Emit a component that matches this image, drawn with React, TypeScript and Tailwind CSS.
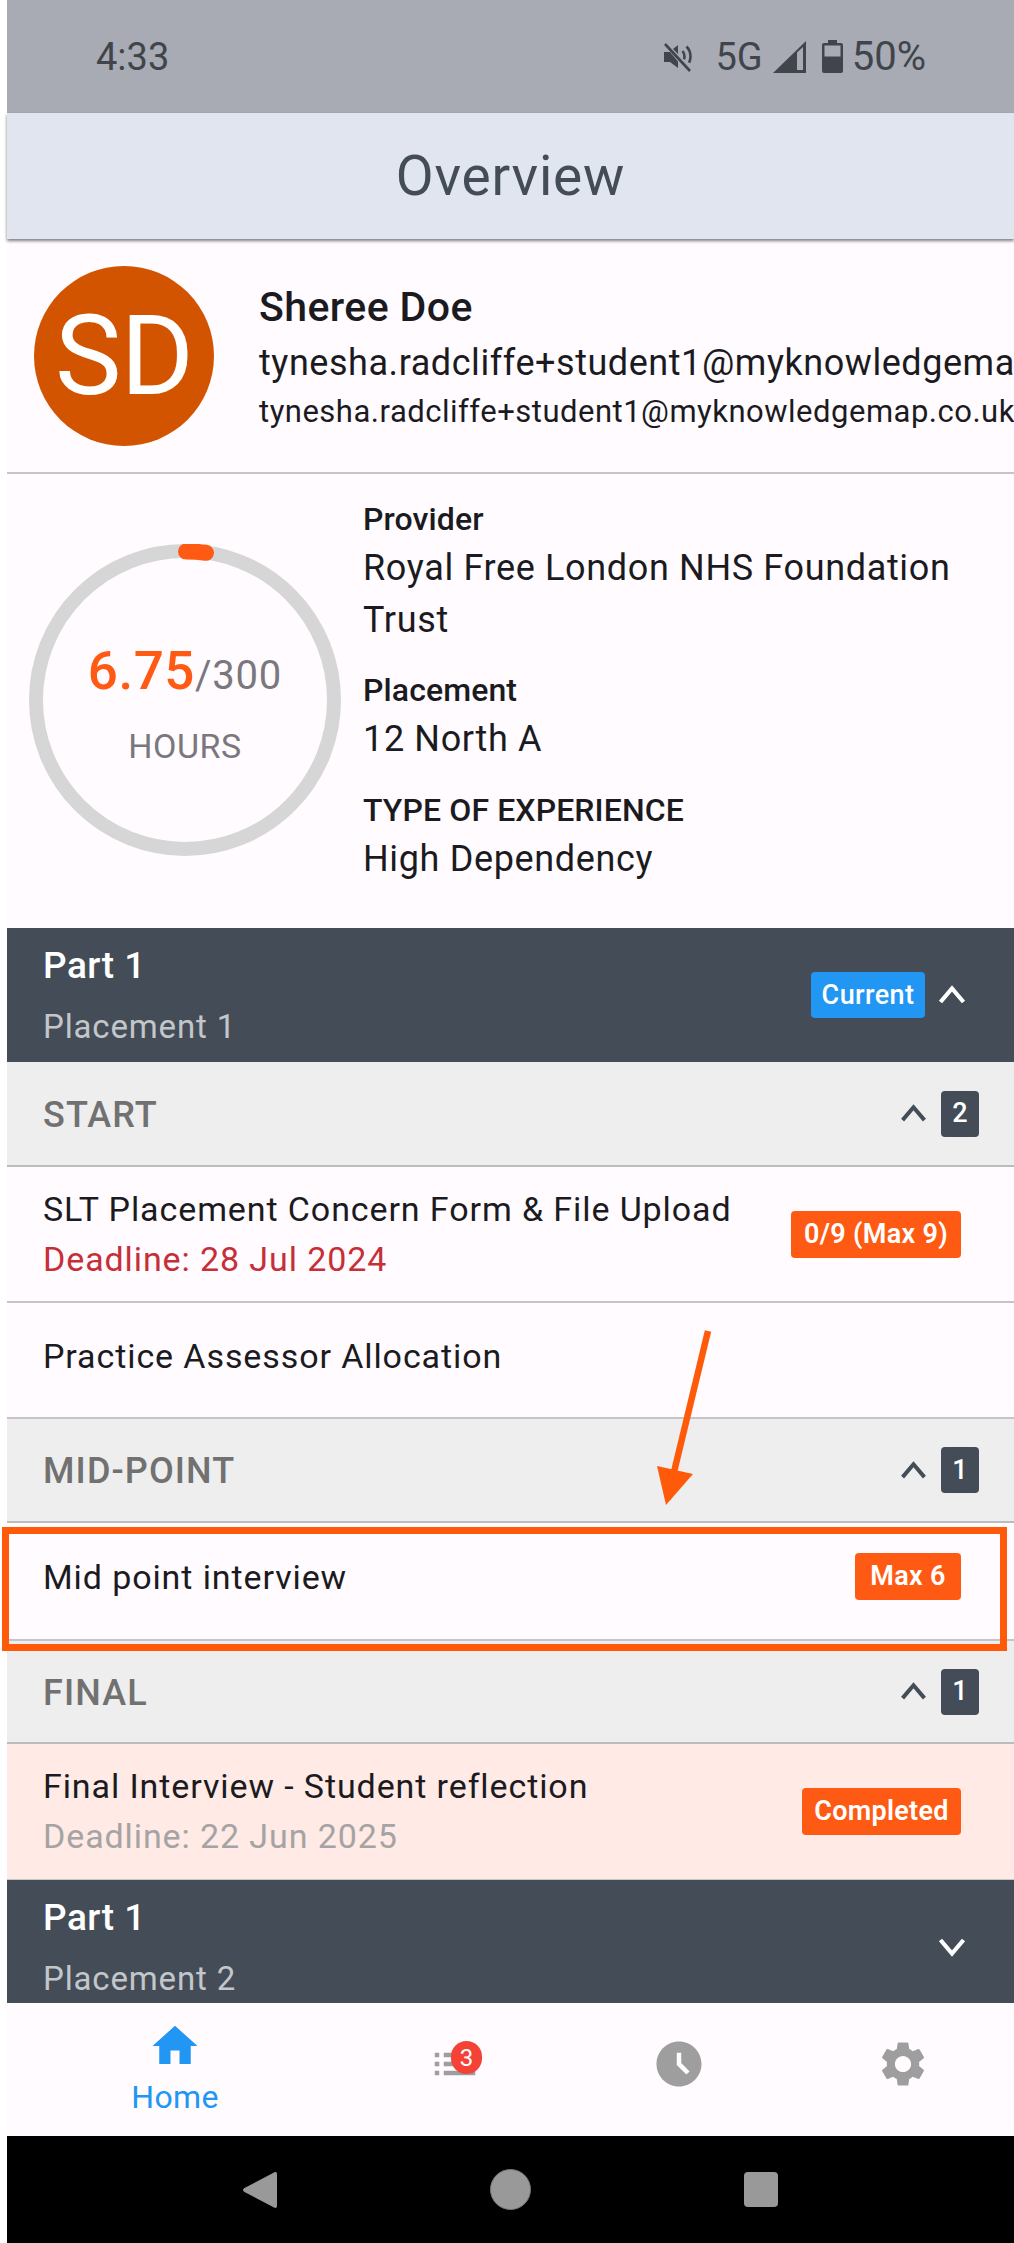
const font = { fontFamily: 'Roboto, "Liberation Sans", sans-serif' };

function Chevron({ up, className }: { up: boolean; className: string }) {
  return (
    <svg viewBox="0 0 28 20" className={className} fill="none" stroke="currentColor" strokeWidth="4.2">
      <path d={up ? "M2.5 17 14 3.5 25.5 17" : "M2.5 3 14 16.5 25.5 3"} />
    </svg>
  );
}

function PartHeader({ sub, current, up }: { sub: string; current?: boolean; up: boolean }) {
  return (
    <div className="flex h-[134px] shrink-0 items-center bg-[#444d57] pl-[36px]">
      <div className="flex-1 pt-[2px]">
        <div className="text-[37px] leading-[61px] font-medium tracking-[0.5px] text-white">Part 1</div>
        <div className="text-[33px] leading-[61px] tracking-[0.85px] text-[#c3c6ca]">{sub}</div>
      </div>
      {current && (
        <div className="mr-[13px] flex h-[46px] w-[114px] items-center justify-center rounded-[4px] bg-[#2196f3] text-[27px] font-medium tracking-[0.4px] text-white">
          Current
        </div>
      )}
      <Chevron up={up} className="mr-[48px] h-[20px] w-[28px] text-white" />
    </div>
  );
}

function Section({ title, count, height }: { title: string; count: number; height: string }) {
  return (
    <div className={`flex shrink-0 items-center border-b-[2px] border-[#bcbcbc] bg-[#eeeeee] pl-[36px] ${height}`}>
      <div className="flex-1 pt-[2px] text-[36px] font-medium tracking-[1.1px] text-[#717171]">{title}</div>
      <Chevron up className="mr-[14px] h-[19px] w-[27px] text-[#444d57]" />
      <div className="mr-[35px] flex h-[46px] w-[38px] items-center justify-center rounded-[4px] bg-[#444d57] text-[27px] font-medium text-white">
        {count}
      </div>
    </div>
  );
}

function Badge({ children, className }: { children: string; className: string }) {
  return (
    <div className={`flex items-center justify-center rounded-[4px] bg-[#ff5a14] text-[27px] font-semibold tracking-[0.3px] text-white ${className}`}>
      {children}
    </div>
  );
}

function Item({
  title,
  deadline,
  deadlineClass,
  badge,
  badgeClass,
  textClass,
  className,
}: {
  title: string;
  deadline?: string;
  deadlineClass?: string;
  badge?: string;
  badgeClass?: string;
  textClass?: string;
  className: string;
}) {
  return (
    <div className={`flex shrink-0 items-center pl-[36px] pr-[53px] ${className}`}>
      <div className={`flex-1 ${textClass ?? ""}`}>
        <div className="text-[34px] leading-[50px] tracking-[0.9px] text-[#1b1b1f]">{title}</div>
        {deadline && <div className={`text-[34px] leading-[50px] tracking-[0.9px] ${deadlineClass}`}>{deadline}</div>}
      </div>
      {badge && <Badge className={badgeClass ?? ""}>{badge}</Badge>}
    </div>
  );
}

function Info({ label, lines, className }: { label: string; lines: string[]; className: string }) {
  return (
    <div className={className}>
      <div className="text-[32px] leading-[40px] font-medium tracking-[0.1px] text-[#1b1b1f]">{label}</div>
      <div className="mt-[3px]">
        {lines.map((l) => (
          <div key={l} className="text-[36px] leading-[52px] tracking-[0.65px] text-[#1b1b1f]">
            {l}
          </div>
        ))}
      </div>
    </div>
  );
}

function NavIcon({ d, className }: { d: string; className: string }) {
  return (
    <svg viewBox="0 0 24 24" className={className} fill="currentColor">
      <path d={d} />
    </svg>
  );
}

export default function App() {
  return (
    <div style={font} className="relative flex h-[2243px] w-[1014px] flex-col overflow-hidden bg-white pl-[7px]">
      {/* status bar */}
      <div className="flex h-[113px] shrink-0 items-center bg-[#a8abb3] pl-[89px] text-[#40454c]">
        <div className="flex-1 text-[38px] leading-none">4:33</div>
        <svg viewBox="0 0 32 32" className="mr-[21px] h-[32px] w-[32px]" fill="none" stroke="currentColor" strokeWidth="2.6">
          <path d="M3 3l25 27" />
          <path d="M2 11h6l8 9.500V27l-8-6H2z" fill="currentColor" stroke="none" />
          <path d="M11 8l5-4v9z" fill="currentColor" stroke="none" />
          <path d="M20.500 10c1.300 1.500 2 3.500 2 5.500 0 1-.2 2-.5 2.800M24.500 5.500c2.600 2.600 4 6.300 4 10 0 2.200-.5 4.300-1.400 6.200" />
        </svg>
        <div className="mr-[10px] text-[38px] leading-none">5G</div>
        <svg viewBox="0 0 33 32" className="mr-[16px] h-[32px] w-[33px]">
          <path d="M0 32 33 0v32z" fill="currentColor" />
          <path d="M24 11.500 24 29h6V6z" fill="#a8abb3" />
        </svg>
        <svg viewBox="0 0 21 33" className="mr-[9px] h-[33px] w-[21px]">
          <path d="M6 0h9v3h4a2 2 0 0 1 2 2v26a2 2 0 0 1-2 2H2a2 2 0 0 1-2-2V5a2 2 0 0 1 2-2h4z" fill="currentColor" />
          <rect x="2.500" y="5.500" width="16" height="11" fill="#a8abb3" />
        </svg>
        <div className="mr-[88px] text-[40px] leading-none">50%</div>
      </div>

      {/* app bar */}
      <div className="z-10 flex h-[126px] shrink-0 items-center justify-center bg-[#e0e5f0] text-[55px] tracking-[0.8px] text-[#444d57] shadow-[0_2px_3px_rgba(0,0,0,0.5)]">
        Overview
      </div>

      {/* scrolling content */}
      <div className="flex min-h-0 flex-1 flex-col overflow-hidden bg-[#fffbff]">
        {/* profile */}
        <div className="flex h-[235px] shrink-0 items-start overflow-hidden border-b-[2px] border-[#c6c4c9] pl-[27px]">
          <div className="mt-[27px] flex h-[180px] w-[180px] shrink-0 items-center justify-center rounded-full bg-[#d35400] text-[112px] leading-none tracking-[-1px] text-white">
            SD
          </div>
          <div className="ml-[45px] mt-[41px] whitespace-nowrap text-[#1b1b1f]">
            <div className="text-[41px] leading-[54px] font-medium tracking-[0.4px]">Sheree Doe</div>
            <div className="text-[36px] leading-[58px] tracking-[0.55px]">tynesha.radcliffe+student1@myknowledgemap.co.uk</div>
            <div className="text-[31px] leading-[40px] tracking-[0.5px]">tynesha.radcliffe+student1@myknowledgemap.co.uk</div>
          </div>
        </div>

        {/* summary */}
        <div className="flex h-[454px] shrink-0">
          <div className="relative ml-[22px] mt-[70px] h-[312px] w-[312px] shrink-0">
            <svg viewBox="0 0 312 312" className="absolute inset-0 h-full w-full" fill="none">
              <circle cx="156" cy="156" r="149" stroke="#d6d6d6" strokeWidth="14" />
              <path d="M157 7.500 A149 149 0 0 1 177 8.800" stroke="#ff5a14" strokeWidth="16" strokeLinecap="round" />
            </svg>
            <div className="absolute inset-x-0 top-[95px] flex flex-col items-center">
              <div className="whitespace-nowrap leading-[64px]">
                <span className="text-[53px] font-medium tracking-[0.5px] text-[#ff5a14]">6.75</span>
                <span className="text-[40px] tracking-[0.8px] text-[#7a777d]">/300</span>
              </div>
              <div className="mt-[8px] text-[34px] leading-[44px] tracking-[0.5px] text-[#7a777d]">HOURS</div>
            </div>
          </div>
          <div className="ml-[22px] flex flex-col pt-[25px]">
            <Info label="Provider" lines={["Royal Free London NHS Foundation", "Trust"]} className="" />
            <Info label="Placement" lines={["12 North A"]} className="mt-[24px]" />
            <Info label="TYPE OF EXPERIENCE" lines={["High Dependency"]} className="mt-[25px]" />
          </div>
        </div>

        <PartHeader sub="Placement 1" current up />
        <Section title="START" count={2} height="h-[105px]" />
        <Item
          title="SLT Placement Concern Form & File Upload"
          deadline="Deadline: 28 Jul 2024"
          deadlineClass="text-[#c62f37]"
          badge="0/9 (Max 9)"
          badgeClass="h-[47px] w-[170px]"
          className="h-[136px] border-b-[2px] border-[#c6c4c9]"
        />
        <Item
          title="Practice Assessor Allocation"
          textClass="pt-[2px]"
          className="h-[116px] border-b-[2px] border-[#c6c4c9] pb-[10px]"
        />
        <Section title="MID-POINT" count={1} height="h-[104px]" />
        <Item
          title="Mid point interview"
          textClass="pt-[2px]"
          badge="Max 6"
          badgeClass="h-[47px] w-[106px]"
          className="h-[118px] border-b-[2px] border-[#c6c4c9] pb-[10px]"
        />
        <Section title="FINAL" count={1} height="h-[103px]" />
        <Item
          title="Final Interview - Student reflection"
          textClass="pb-[2px]"
          deadline="Deadline: 22 Jun 2025"
          deadlineClass="text-[#a5a3a4]"
          badge="Completed"
          badgeClass="h-[47px] w-[159px]"
          className="h-[136px] border-b-[1px] border-[#c6c4c9] bg-[#ffeae5]"
        />
        <PartHeader sub="Placement 2" up={false} />
      </div>

      {/* bottom nav */}
      <div className="grid h-[133px] shrink-0 grid-cols-[336px_224px_224px_224px] bg-[#fffbff] text-[#9e9e9e]">
        <div className="flex flex-col items-center pt-[16px] text-[#2196f3]">
          <NavIcon d="M10 20v-6h4v6h5v-8h3L12 3 2 12h3v8z" className="h-[54px] w-[54px]" />
          <div className="mt-[2px] text-[32px] leading-[44px] tracking-[0.3px]">Home</div>
        </div>
        <div className="flex justify-center pt-[34px]">
          <div className="relative h-[54px] w-[54px]">
            <NavIcon
              d="M3 13h2v-2H3v2zm0 4h2v-2H3v2zm0-8h2V7H3v2zm4 4h14v-2H7v2zm0 4h14v-2H7v2zM7 7v2h14V7H7z"
              className="h-[54px] w-[54px]"
            />
            <div className="absolute left-[23px] top-[4px] flex h-[33px] w-[31px] items-center justify-center rounded-full bg-[#f44336] text-[24px] leading-none text-white">
              3
            </div>
          </div>
        </div>
        <div className="flex justify-center pt-[34px]">
          <NavIcon
            d="M11.99 2C6.47 2 2 6.48 2 12s4.47 10 9.99 10C17.52 22 22 17.52 22 12S17.52 2 11.99 2zm3.3 14.71L11 12.41V7h2v4.59l3.71 3.71-1.42 1.41z"
            className="h-[54px] w-[54px]"
          />
        </div>
        <div className="flex justify-center pt-[34px]">
          <NavIcon
            d="M19.14 12.94c.04-.3.06-.61.06-.94 0-.32-.02-.64-.07-.94l2.03-1.58c.18-.14.23-.41.12-.61l-1.92-3.32c-.12-.22-.37-.29-.59-.22l-2.39.96c-.5-.38-1.03-.7-1.62-.94l-.36-2.54c-.04-.24-.24-.41-.48-.41h-3.84c-.24 0-.43.17-.47.41l-.36 2.54c-.59.24-1.13.57-1.62.94l-2.39-.96c-.22-.08-.47 0-.59.22L2.74 8.87c-.12.21-.08.47.12.61l2.03 1.58c-.05.3-.09.63-.09.94s.02.64.07.94l-2.03 1.58c-.18.14-.23.41-.12.61l1.92 3.32c.12.22.37.29.59.22l2.39-.96c.5.38 1.03.7 1.62.94l.36 2.54c.05.24.24.41.48.41h3.84c.24 0 .44-.17.47-.41l.36-2.54c.59-.24 1.13-.56 1.62-.94l2.39.96c.22.08.47 0 .59-.22l1.92-3.32c.12-.22.07-.47-.12-.61l-2.01-1.58zM12 15.6c-1.98 0-3.6-1.62-3.6-3.6s1.62-3.6 3.6-3.6 3.6 1.62 3.6 3.6-1.62 3.6-3.6 3.6z"
            className="h-[54px] w-[54px]"
          />
        </div>
      </div>

      {/* android navigation */}
      <div className="flex h-[107px] shrink-0 items-center justify-center gap-[213px] bg-black">
        <svg viewBox="0 0 34 38" className="h-[38px] w-[34px]">
          <path d="M31 1.500c1.500-1 3-.3 3 1.500v32c0 1.800-1.500 2.500-3 1.500L1.500 21c-2-1-2-3 0-4z" fill="#999999" />
        </svg>
        <div className="h-[41px] w-[41px] rounded-full border border-[#777777] bg-[#999999]" />
        <div className="h-[35px] w-[34px] rounded-[4px] bg-[#999999]" />
      </div>

      {/* annotation drawn over the screenshot */}
      <div className="absolute left-[2px] top-[1527px] h-[124px] w-[1005px] border-[7px] border-[#ff5a0a]" />
      <svg viewBox="0 0 1014 2243" className="pointer-events-none absolute inset-0 h-[2243px] w-[1014px]" fill="none">
        <path d="M708 1331 L674 1472" stroke="#ff5a0a" strokeWidth="6.500" />
        <path d="M657 1466 L693 1474 L666 1505 Z" fill="#ff5a0a" />
      </svg>
    </div>
  );
}
